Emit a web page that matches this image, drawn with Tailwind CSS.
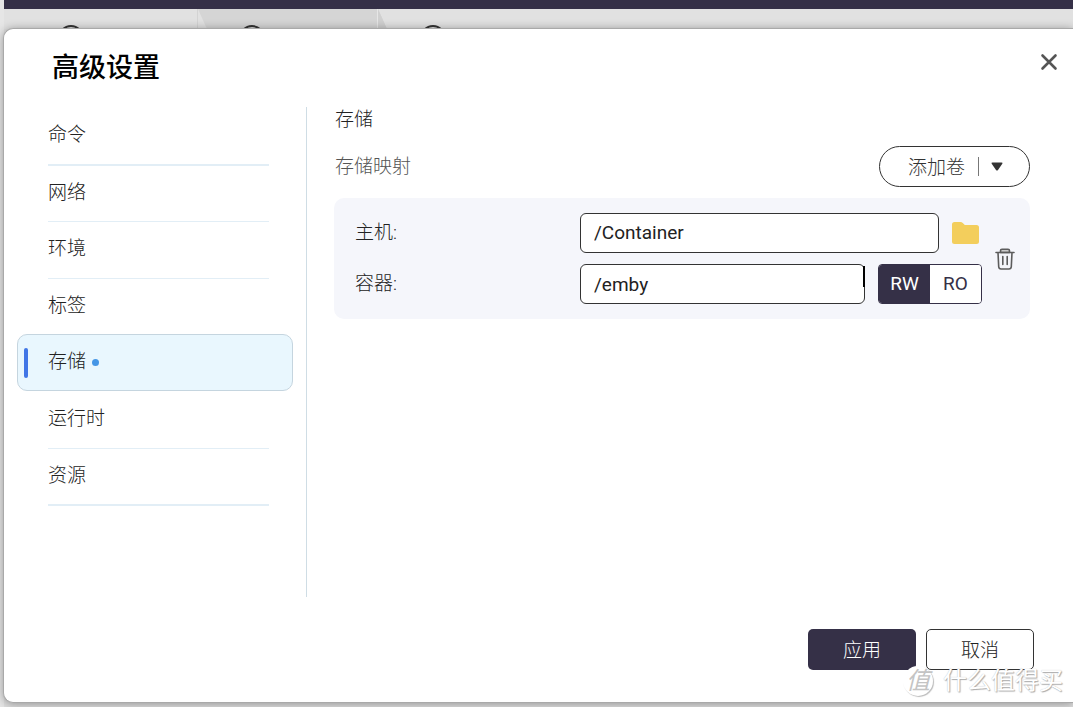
<!DOCTYPE html>
<html lang="zh-CN">
<head>
<meta charset="utf-8">
<title>高级设置</title>
<script src="https://cdn.jsdelivr.net/npm/@tailwindcss/browser@4"></script>
</head>
<body class="bg-[#dedede] font-[Roboto,'Noto_Sans_CJK_SC',sans-serif] text-[19px] leading-7 font-light text-[#222]">
<div class="relative flex min-h-screen flex-col overflow-hidden pt-7 pb-1 pl-[3px]">

  <!-- Page behind the dialog -->
  <div class="absolute inset-0 border-l-4 border-[#e6e6e6]" aria-hidden="true">
    <div class="h-[9px] bg-[#353047]"></div>
    <svg class="block h-5 w-full" fill="none">
      <rect width="100%" height="20" fill="#e1e1e1"/>
      <path d="M194 0H374L383 20H203Z" fill="#d5d5d5"/>
      <path d="M374 0V20H383L374 0Z" fill="#d0d0d0"/>
      <path d="M193.500 0V20" stroke="#d3d3d3"/>
      <path d="M373.500 0V20" stroke="#e6e6e6"/>
      <g stroke="#333" stroke-width="2">
        <circle cx="67" cy="29" r="12"/><circle cx="248" cy="29" r="12"/><circle cx="429" cy="29" r="12"/>
      </g>
    </svg>
  </div>

  <section role="dialog" aria-labelledby="title" class="relative flex flex-1 flex-col rounded-l-[10px] border border-r-0 border-[#a9a9a9] bg-white pb-8 shadow-[0_1px_10px_rgba(0,0,0,0.35)]">
    <header class="flex h-[78px] items-start justify-between pr-[15px] pl-12">
      <h1 id="title" class="pt-[21px] text-[27px] leading-9 font-medium text-black">高级设置</h1>
      <button type="button" aria-label="关闭" class="mt-6">
        <svg class="size-[18px]" viewBox="0 0 18 18" fill="none" stroke="#555" stroke-width="2.600" stroke-linecap="round"><path d="M2.500 2.500 15.500 15.500M15.500 2.500 2.500 15.500"/></svg>
      </button>
    </header>

    <div class="flex min-h-[490px] flex-1">
      <nav class="w-[303px] shrink-0 border-r border-[#cfdde5] pr-[13px] pl-[13px]">
        <ul>
          <li><a href="#" class="mr-6 ml-[31px] flex h-[59px] items-center border-b-2 border-[#e2eef6] pb-0.5">命令</a></li>
          <li><a href="#" class="mr-6 ml-[31px] flex h-14 items-center border-b border-[#e2eef6] pb-0.5">网络</a></li>
          <li><a href="#" class="mr-6 ml-[31px] flex h-[57px] items-center border-b border-[#e2eef6] pb-0.5">环境</a></li>
          <li><a href="#" class="mr-6 ml-[31px] flex h-[55px] items-center pb-0.5">标签</a></li>
          <li><a href="#" aria-current="page" class="flex h-[57px] items-center rounded-[10px] border border-[#c5d5df] bg-[#e9f7fe] pl-1.5">
            <span class="h-[30px] w-1 rounded-sm bg-[#4176e6]"></span>
            <span class="ml-5 pb-0.5">存储</span>
            <span class="ml-1.5 size-[7px] rounded-full bg-[#4596e6]"></span>
          </a></li>
          <li><a href="#" class="mr-6 ml-[31px] flex h-[58px] items-center border-b border-[#e2eef6] pb-0.5">运行时</a></li>
          <li><a href="#" class="mr-6 ml-[31px] flex h-[57px] items-center border-b-2 border-[#e2eef6] pb-0.5">资源</a></li>
        </ul>
      </nav>

      <main class="min-w-0 flex-1 pr-[43px] pl-[27px]">
        <h2 class="h-[39px] pl-px leading-[26px]">存储</h2>
        <div class="flex h-[41px] items-center justify-between">
          <h3 class="pl-px text-[#555]">存储映射</h3>
          <button type="button" class="flex h-[41px] w-[151px] items-center rounded-full border border-[#333] pl-7 text-[#333]">
            <span class="pt-0.5">添加卷</span>
            <span class="ml-[13px] h-[19px] w-px bg-[#777]"></span>
            <svg class="ml-3 h-[9px] w-3" viewBox="0 0 12 9" fill="#333"><path d="M1.500.5h9q1.500 0 .8 1.300L7 8Q6 9 5 8L.7 1.800Q0 .5 1.500.5Z"/></svg>
          </button>
        </div>

        <div class="mt-[11px] flex items-center gap-[13px] rounded-[10px] bg-[#f5f6fb] py-[15px] pr-[15px] pl-[21px]">
          <div class="flex min-w-0 flex-1 flex-col gap-[11px]">
            <div class="flex h-10 items-center">
              <label for="host" class="w-[225px] shrink-0">主机:</label>
              <input id="host" type="text" value="/Container" class="h-10 min-w-0 flex-1 rounded-md border border-[#333] bg-white px-[13px] pb-0.5 font-normal">
              <button type="button" aria-label="选择文件夹" class="mr-[3px] ml-[13px]">
                <svg class="h-[22px] w-[27px]" viewBox="0 0 27 22" fill="#f3ce5c"><path d="M2.500 0H8.500Q9.800 0 10.800 1L12.800 3H24.500Q27 3 27 5.500V19.500Q27 22 24.500 22H2.500Q0 22 0 19.500V2.500Q0 0 2.500 0Z"/></svg>
              </button>
            </div>
            <div class="flex h-10 items-center">
              <label for="container" class="w-[225px] shrink-0">容器:</label>
              <div class="relative flex min-w-0 flex-1">
                <input id="container" type="text" value="/emby" class="h-10 min-w-0 flex-1 rounded-md border border-[#333] bg-white px-[13px] font-normal">
                <span class="absolute top-0.5 right-0 h-[21px] w-0.5 bg-black"></span>
              </div>
              <div class="ml-[13px] flex h-10 overflow-hidden rounded border border-[#353047] font-normal">
                <button type="button" aria-pressed="true" class="w-[51px] bg-[#353047] text-white">RW</button>
                <button type="button" aria-pressed="false" class="w-[51px] bg-white text-[#353047]">RO</button>
              </div>
            </div>
          </div>
          <button type="button" aria-label="删除">
            <svg class="h-[22px] w-5" viewBox="0 0 20 22" fill="none" stroke="#5c5c5c" stroke-width="1.600" stroke-linecap="round" stroke-linejoin="round"><path d="M5.500 4.500V2.800Q5.500 1.200 7 1.200H13Q14.500 1.200 14.500 2.800V4.500Z" fill="#ccc"/><path d="M1 4.500H19M3 4.500 3.700 18.800Q3.900 21 6 21H14Q16.100 21 16.300 18.800L17 4.500M7.800 8.500V16.500M12.200 8.500V16.500"/></svg>
          </button>
        </div>
      </main>
    </div>

    <footer class="mt-8 flex justify-end gap-2.5 pr-[39px]">
      <button type="button" class="h-[41px] w-[108px] rounded-[5px] bg-[#353047] pt-0.5 text-white">应用</button>
      <button type="button" class="h-[41px] w-[108px] rounded-[5px] border border-[#333] bg-white pt-0.5">取消</button>
    </footer>
  </section>

  <!-- Watermark -->
  <div class="pointer-events-none absolute right-2.5 bottom-2.5 flex items-center gap-2.5 text-2xl leading-8 font-normal text-white [text-shadow:1px_1px_1px_#aaa,0_0_1px_#bbb]">
    <span class="flex size-[30px] items-center justify-center rounded-full bg-white text-[#c4c4c4] shadow-[1px_1px_1px_#bbb] [text-shadow:none]"><i>值</i></span>
    <span>什么值得买</span>
  </div>
</div>
</body>
</html>
